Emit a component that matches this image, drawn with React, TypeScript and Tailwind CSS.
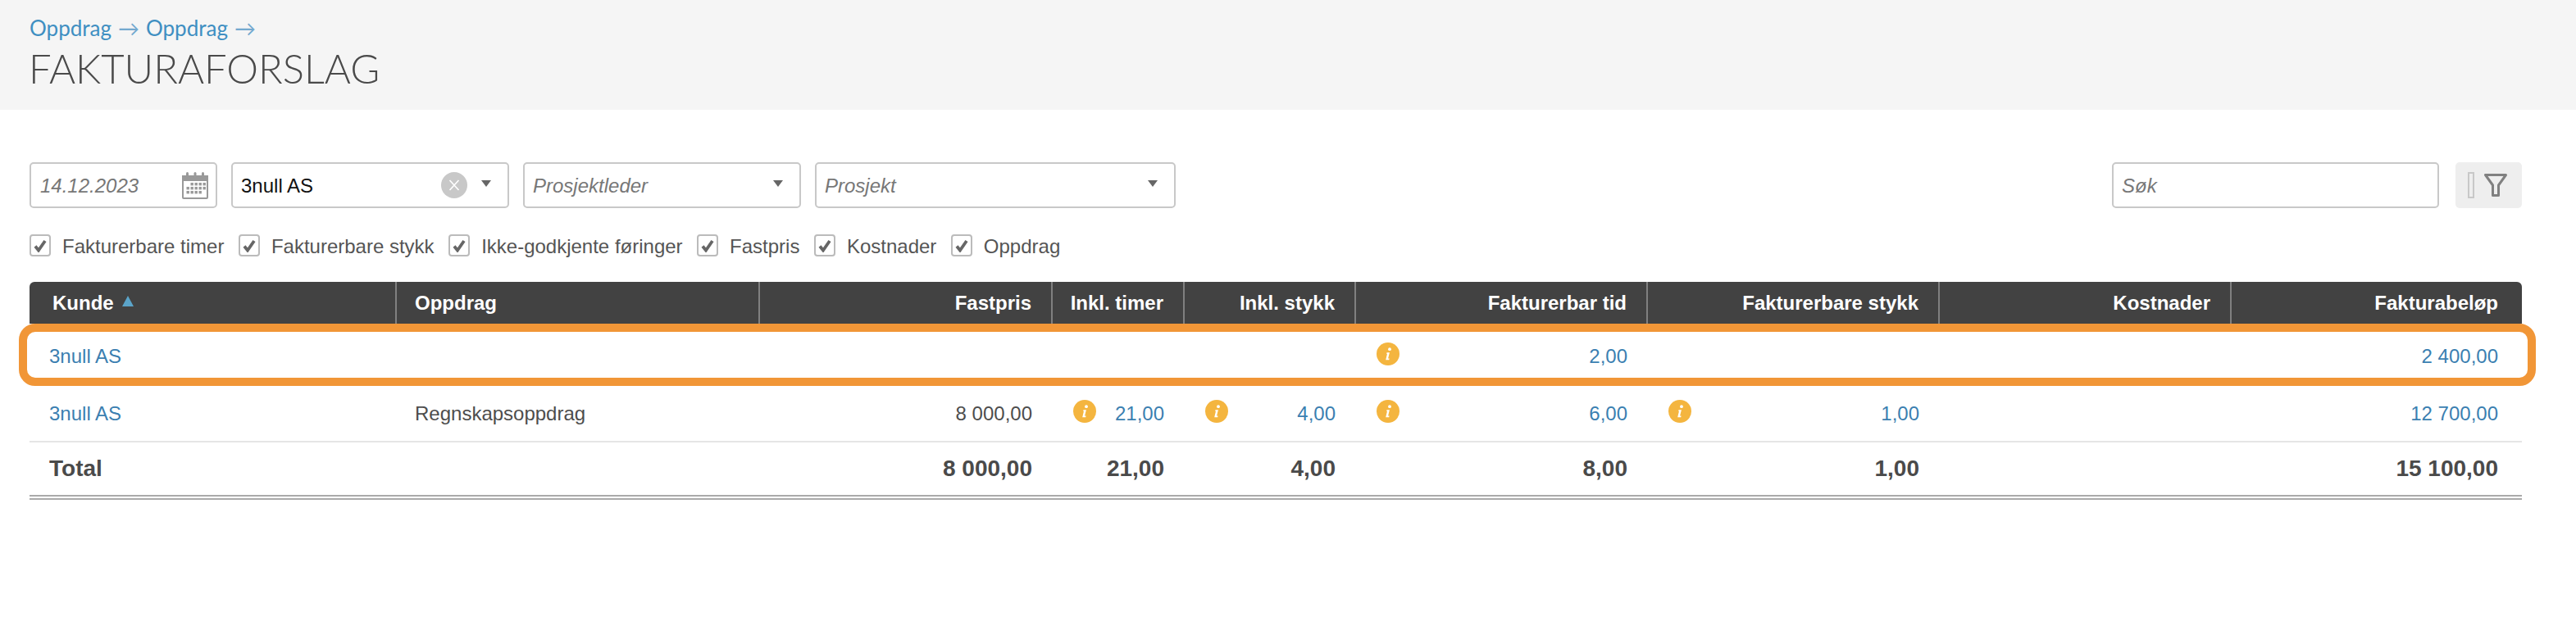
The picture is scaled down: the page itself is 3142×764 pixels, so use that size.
const gridCols = 'grid grid-cols-[448px_443px_357px_161px_209px_356px_356px_356px_354px]';

type Cell = { text?: string; info?: boolean; plain?: boolean };

const headers = [
  'Kunde',
  'Oppdrag',
  'Fastpris',
  'Inkl. timer',
  'Inkl. stykk',
  'Fakturerbar tid',
  'Fakturerbare stykk',
  'Kostnader',
  'Fakturabeløp',
];

const filterLabels = [
  'Fakturerbare timer',
  'Fakturerbare stykk',
  'Ikke-godkjente føringer',
  'Fastpris',
  'Kostnader',
  'Oppdrag',
];

const firstRow: Cell[] = [{}, {}, {}, { text: '2,00', info: true }, {}, {}, { text: '2 400,00' }];
const secondRow: Cell[] = [
  { text: '8 000,00', plain: true },
  { text: '21,00', info: true },
  { text: '4,00', info: true },
  { text: '6,00', info: true },
  { text: '1,00', info: true },
  {},
  { text: '12 700,00' },
];
const totals = ['8 000,00', '21,00', '4,00', '8,00', '1,00', '', '15 100,00'];

function Caret() {
  return <div className="h-0 w-0 border-x-[6px] border-t-[8px] border-x-transparent border-t-[#666]" />;
}

function InfoIcon() {
  return (
    <svg viewBox="0 0 28 28" className="mb-[6px] h-[28px] w-[28px] shrink-0">
      <circle cx="14" cy="14" r="14" fill="#f4b53f" />
      <circle cx="16" cy="8.2" r="1.9" fill="#fff" />
      <path d="M12.6 12.2h3.3l-1.8 7.4h1.5l-.4 1.6h-4l1.8-7.4h-1z" fill="#fff" />
    </svg>
  );
}

function CalendarIcon() {
  const dots = [
    [12, 14],
    [17, 14],
    [22, 14],
    [27, 14],
    [7, 19],
    [12, 19],
    [17, 19],
    [22, 19],
    [27, 19],
    [7, 24],
    [12, 24],
    [17, 24],
    [22, 24],
  ];
  return (
    <svg viewBox="0 0 32 33" className="h-[33px] w-[32px]">
      <path d="M1 5h30v26a1 1 0 0 1-1 1H2a1 1 0 0 1-1-1z" fill="#fff" stroke="#999" strokeWidth="2" />
      <rect x="1" y="4" width="30" height="7" fill="#999" />
      <rect x="5" y="0" width="3" height="7" rx="1.5" fill="#999" />
      <rect x="14.5" y="0" width="3" height="7" rx="1.5" fill="#999" />
      <rect x="24" y="0" width="3" height="7" rx="1.5" fill="#999" />
      {dots.map(([x, y]) => (
        <rect key={`${x}-${y}`} x={x - 1.5} y={y - 1} width="3.4" height="3.4" fill="#999" />
      ))}
    </svg>
  );
}

function SelectBox({ label, value, clearable, width }: { label: string; value?: boolean; clearable?: boolean; width: string }) {
  return (
    <div className={`flex h-[56px] ${width} items-center rounded-[5px] border-2 border-[#c8c8c8] pl-[10px] pr-[20px]`}>
      <span className={value ? 'flex-1 pt-[1px] text-[24px] text-[#111]' : 'flex-1 pt-[1px] text-[24px] italic text-[#777]'}>{label}</span>
      {clearable && (
        <div className="mr-[17px] flex h-[32px] w-[32px] items-center justify-center rounded-full bg-[#c8c8c8]">
          <svg viewBox="0 0 16 16" className="h-[16px] w-[16px]">
            <path d="M2.5 2l11 12M13.5 2l-11 12" stroke="#fff" strokeWidth="1.6" fill="none" />
          </svg>
        </div>
      )}
      <div className="mb-[5px]">
        <Caret />
      </div>
    </div>
  );
}

function ValueCell({ cell, last }: { cell: Cell; last?: boolean }) {
  return (
    <div className={`flex items-center justify-between pl-[25px] ${last ? 'pr-[29px]' : 'pr-[25px]'}`}>
      {cell.info ? <InfoIcon /> : <span />}
      {cell.text && <span className={cell.plain ? 'text-[#4d4d4d]' : 'text-[#3b7fb1]'}>{cell.text}</span>}
    </div>
  );
}

export default function App() {
  return (
    <div className="min-h-[764px] bg-white font-['Liberation_Sans',sans-serif] text-[24px] text-[#4d4d4d]">
      <header className="h-[134px] bg-[#f5f5f5] pl-[36px] pt-[17px] font-['Lato',sans-serif]">
        <div className="flex h-[34px] items-center gap-[8px] text-[26px] font-normal text-[#3f8fc2]">
          <span>Oppdrag</span>
          <span className="text-[#74a9cf]">→</span>
          <span>Oppdrag</span>
          <span className="text-[#74a9cf]">→</span>
        </div>
        <h1 className="-ml-[1px] mt-[3px] text-[49px] font-light leading-[58px] text-[#4a4a4a]">FAKTURAFORSLAG</h1>
      </header>

      <main className="pl-[36px] pr-[66px] pt-[64px]">
        <div className="flex gap-[17px]">
          <div className="flex h-[56px] w-[229px] items-center justify-between rounded-[5px] border-2 border-[#c8c8c8] pl-[11px] pr-[9px]">
            <span className="pt-[1px] italic text-[#777]">14.12.2023</span>
            <CalendarIcon />
          </div>
          <SelectBox label="3null AS" value clearable width="w-[339px]" />
          <SelectBox label="Prosjektleder" width="w-[339px]" />
          <SelectBox label="Prosjekt" width="w-[440px]" />
          <div className="ml-auto flex h-[56px] w-[399px] items-center rounded-[5px] border-2 border-[#c8c8c8] pl-[10px] pt-[1px] italic text-[#777]">
            Søk
          </div>
          <div className="ml-[3px] flex h-[56px] w-[81px] items-center gap-[12px] rounded-[5px] bg-[#eeeeee] pl-[15px]">
            <div className="h-[32px] w-[8px] border-2 border-[#c8c8c8]" />
            <svg viewBox="0 0 28 28" className="h-[28px] w-[28px]">
              <path d="M1.5 1.5h25L17.5 14v12.5h-7V14z" fill="none" stroke="#808080" strokeWidth="3" strokeLinejoin="round" />
            </svg>
          </div>
        </div>

        <div className="mt-[32px] flex h-[27px] items-center gap-[17.5px] text-[#555]">
          {filterLabels.map((label) => (
            <label key={label} className="flex items-center gap-[14px]">
              <span className="flex h-[27px] w-[26px] items-center justify-center rounded-[4px] border-2 border-[#bbbbbb]">
                <svg viewBox="0 0 16 16" className="h-[16px] w-[16px]">
                  <path d="M2 8.5l4 5L14 2" fill="none" stroke="#666" strokeWidth="3.8" />
                </svg>
              </span>
              <span className="pt-[2px]">{label}</span>
            </label>
          ))}
        </div>

        <div className="mt-[31px]">
          <div className={`${gridCols} h-[51px] rounded-t-[6px] bg-[#424242] font-bold text-white`}>
            {headers.map((h, i) => (
              <div
                key={h}
                className={
                  i === 0
                    ? 'flex items-center gap-[10px] border-r-2 border-[#808080] pl-[28px]'
                    : i === 1
                      ? 'flex items-center border-r-2 border-[#808080] pl-[22px]'
                      : i === 8
                        ? 'flex items-center justify-end pr-[29px]'
                        : 'flex items-center justify-end border-r-2 border-[#808080] pr-[24px]'
                }
              >
                {h}
                {i === 0 && <div className="mb-[4px] h-0 w-0 border-x-[7px] border-b-[13px] border-x-transparent border-b-[#5ba4c9]" />}
              </div>
            ))}
          </div>

          <div className={`${gridCols} relative h-[76px] pt-[4px]`}>
            <div className="flex items-center pl-[24px] text-[#3b7fb1]">3null AS</div>
            <div />
            {firstRow.map((cell, i) => (
              <ValueCell key={i} cell={cell} last={i === firstRow.length - 1} />
            ))}
            <div className="pointer-events-none absolute -left-[13px] -right-[17px] bottom-0 top-0 rounded-[20px] border-[10px] border-[#f19637]" />
          </div>

          <div className={`${gridCols} h-[69px] border-b-2 border-[#e5e5e5]`}>
            <div className="flex items-center pl-[24px] text-[#3b7fb1]">3null AS</div>
            <div className="flex items-center pl-[22px]">Regnskapsoppdrag</div>
            {secondRow.map((cell, i) => (
              <ValueCell key={i} cell={cell} last={i === secondRow.length - 1} />
            ))}
          </div>

          <div className={`${gridCols} h-[66px] border-b-2 border-[#aaaaaa] text-[28px] font-bold text-[#4a4a4a]`}>
            <div className="flex items-center pl-[24px]">Total</div>
            <div />
            {totals.map((t, i) => (
              <div key={i} className={`flex items-center justify-end ${i === totals.length - 1 ? 'pr-[29px]' : 'pr-[25px]'}`}>
                {t}
              </div>
            ))}
          </div>
          <div className="mt-[2px] h-[2px] bg-[#aaaaaa]" />
        </div>
      </main>
    </div>
  );
}
